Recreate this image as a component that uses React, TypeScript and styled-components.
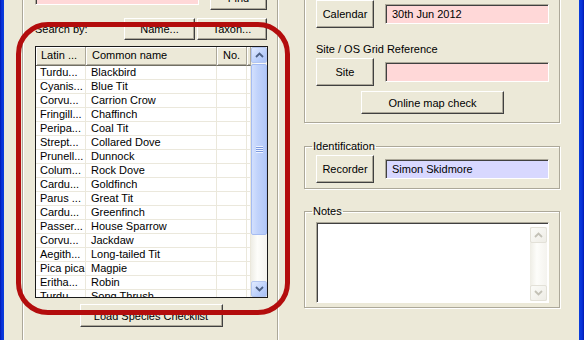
import React from "react";
import styled, { createGlobalStyle } from "styled-components";

const GlobalStyle = createGlobalStyle`
  html, body {
    margin: 0;
    padding: 0;
  }
  body {
    font-family: "Liberation Sans", Arial, sans-serif;
    font-size: 11px;
    color: #000;
    background: #ECE9D8;
  }
`;

const Frame = styled.div`
  position: relative;
  width: 584px;
  height: 340px;
  overflow: hidden;
  display: flex;
  background: #ECE9D8;
`;

const FrameEdge = styled.div<{ $w: number; $dir: string }>`
  width: ${(p) => p.$w}px;
  flex: none;
  background: linear-gradient(${(p) => p.$dir}, #0a3edb, #0831d9 60%, #0019b0);
`;

const Body = styled.div`
  flex: 1;
  display: flex;
  align-items: stretch;
  padding-left: 18px;
`;

const LeftPanel = styled.div`
  width: 256px;
  box-sizing: border-box;
  display: flex;
  flex-direction: column;
  padding: 0 10px 0 12px;
  border-left: 1px solid #aca899;
  border-right: 1px solid #aca899;
  box-shadow: inset 1px 0 #fff, 1px 0 #fff;
`;

const TopRow = styled.div`
  display: flex;
  align-items: flex-start;
  justify-content: space-between;
  height: 24px;
  margin-top: -14px;
`;

const SearchRow = styled.div`
  display: flex;
  align-items: center;
  height: 22px;
  margin-top: 8px;
  gap: 2px;
`;

const Label = styled.div`
  flex: 1;
  line-height: 14px;
  white-space: nowrap;
`;

const Button = styled.button<{ $w: number; $h: number }>`
  width: ${(p) => p.$w}px;
  height: ${(p) => p.$h}px;
  flex: none;
  box-sizing: border-box;
  padding: 0;
  font: inherit;
  color: #000;
  background: #ece9d8;
  border: 1px solid;
  border-color: #fff #404040 #404040 #fff;
  box-shadow: inset -1px -1px #aca899;
  white-space: nowrap;
`;

const Field = styled.div<{ $bg: string; $w: number; $h: number }>`
  width: ${(p) => p.$w}px;
  height: ${(p) => p.$h}px;
  flex: none;
  box-sizing: border-box;
  background: ${(p) => p.$bg};
  border: 1px solid;
  border-color: #aca899 #fff #fff #aca899;
  box-shadow: inset 1px 1px #404040;
  padding: 3px 0 0 6px;
  line-height: 13px;
  white-space: nowrap;
`;

const ListBox = styled.div`
  margin-top: 6px;
  width: 233px;
  height: 252px;
  box-sizing: border-box;
  border: 1px solid #1a1a1a;
  background: #fff;
  display: flex;
  overflow: hidden;
`;

const DataArea = styled.div`
  flex: 1;
  display: flex;
  flex-direction: column;
  overflow: hidden;
`;

const GridRow = styled.div`
  display: grid;
  grid-template-columns: 50px 131px 30px 1fr;
  flex: none;
`;

const HeadCell = styled.div<{ $pad: number }>`
  height: 19px;
  box-sizing: border-box;
  padding-left: ${(p) => p.$pad}px;
  line-height: 17px;
  background: #ece9d8;
  border-right: 1px solid #aca899;
  border-bottom: 1px solid #716f64;
  box-shadow: inset 1px 1px #fff, inset 0 -1px #aca899;
  white-space: nowrap;
  overflow: hidden;
`;

const Cell = styled.div<{ $pad: number }>`
  height: 14px;
  box-sizing: border-box;
  padding-left: ${(p) => p.$pad}px;
  line-height: 13px;
  border-right: 1px solid #ebe8dc;
  border-bottom: 1px solid #ebe8dc;
  white-space: nowrap;
  overflow: hidden;
`;

const ScrollBar = styled.div<{ $off?: boolean }>`
  width: ${(p) => (p.$off ? 17 : 16)}px;
  flex: none;
  display: flex;
  flex-direction: column;
  background: linear-gradient(to right, #eeede5, #fdfdfa 40%, #f4f3ee);
`;

const ScrollButton = styled.div<{ $off?: boolean }>`
  height: 16px;
  flex: none;
  box-sizing: border-box;
  display: flex;
  align-items: center;
  justify-content: center;
  border-radius: 2px;
  border: 1px solid ${(p) => (p.$off ? "#e3e1d8" : "#b4c6f0")};
  background: ${(p) =>
    p.$off
      ? "linear-gradient(135deg, #fbfbf8, #eeede6)"
      : "linear-gradient(135deg, #e2ebfe, #bcd0fb 60%, #a9c1f5)"};
`;

const Track = styled.div`
  flex: 1;
  display: flex;
  flex-direction: column;
`;

const Thumb = styled.div`
  height: 171px;
  margin-top: 1px;
  box-sizing: border-box;
  border: 1px solid #a5bcf2;
  border-radius: 2px;
  background: linear-gradient(to right, #d3e0fd, #c1d3fb 40%, #b2c8f8);
  display: flex;
  align-items: center;
  justify-content: center;
`;

const Grip = styled.div`
  width: 7px;
  height: 7px;
  background: repeating-linear-gradient(
    to bottom,
    #eef3fe 0,
    #eef3fe 1px,
    #7d9ae0 1px,
    #7d9ae0 2px
  );
`;

const LoadRow = styled.div`
  display: flex;
  justify-content: center;
  margin-top: 6px;
`;

const RightCol = styled.div`
  width: 256px;
  margin-left: 26px;
  display: flex;
  flex-direction: column;
`;

const Group = styled.fieldset<{ $pt: number; $pb: number }>`
  margin: 0;
  min-width: 0;
  padding: ${(p) => p.$pt}px 10px ${(p) => p.$pb}px 11px;
  border: 1px solid #aca899;
  box-shadow: 1px 1px #fff, inset 1px 1px #fff;
  display: flex;
  flex-direction: column;
`;

const Legend = styled.legend`
  padding: 0 1px;
  margin-left: -4px;
  line-height: 13px;
`;

const FieldRow = styled.div`
  display: flex;
  align-items: center;
  gap: 11px;
`;

const CenterRow = styled.div`
  display: flex;
  justify-content: center;
  margin-top: 5px;
`;

const SubLabel = styled.div`
  line-height: 14px;
  margin: 14px 0 2px;
`;

const NotesBox = styled.div`
  height: 81px;
  box-sizing: border-box;
  background: #fff;
  border: 1px solid;
  border-color: #aca899 #fff #fff #aca899;
  box-shadow: inset 1px 1px #404040;
  display: flex;
  justify-content: flex-end;
  padding: 4px 1px 1px 0;
`;

const Annotation = styled.div`
  position: absolute;
  left: 16px;
  top: 22px;
  width: 274px;
  height: 293px;
  box-sizing: border-box;
  border: 5px solid #b30d0d;
  border-radius: 32px;
  pointer-events: none;
`;

const Chevron = ({ up, color }: { up: boolean; color: string }) => (
  <svg width="9" height="6" viewBox="0 0 9 6">
    <path
      d={up ? "M1 5 L4.5 1.5 L8 5" : "M1 1 L4.5 4.5 L8 1"}
      fill="none"
      stroke={color}
      strokeWidth="1.8"
    />
  </svg>
);

const species: [string, string][] = [
  ["Turdu...", "Blackbird"],
  ["Cyanis...", "Blue Tit"],
  ["Corvu...", "Carrion Crow"],
  ["Fringill...", "Chaffinch"],
  ["Peripa...", "Coal Tit"],
  ["Strept...", "Collared Dove"],
  ["Prunell...", "Dunnock"],
  ["Colum...", "Rock Dove"],
  ["Cardu...", "Goldfinch"],
  ["Parus ...", "Great Tit"],
  ["Cardu...", "Greenfinch"],
  ["Passer...", "House Sparrow"],
  ["Corvu...", "Jackdaw"],
  ["Aegith...", "Long-tailed Tit"],
  ["Pica pica", "Magpie"],
  ["Eritha...", "Robin"],
  ["Turdu...", "Song Thrush"],
];

export default function App() {
  return (
    <>
      <GlobalStyle />
      <Frame>
        <FrameEdge $w={4} $dir="to left" />
        <Body>
          <LeftPanel>
            <TopRow>
              <Field $bg="#ffd8d8" $w={164} $h={19} />
              <Button $w={57} $h={24}>
                Find
              </Button>
            </TopRow>
            <SearchRow>
              <Label>Search by:</Label>
              <Button $w={71} $h={22}>
                Name...
              </Button>
              <Button $w={70} $h={22}>
                Taxon...
              </Button>
            </SearchRow>
            <ListBox>
              <DataArea>
                <GridRow>
                  <HeadCell $pad={5}>Latin ...</HeadCell>
                  <HeadCell $pad={6}>Common name</HeadCell>
                  <HeadCell $pad={6}>No.</HeadCell>
                  <HeadCell $pad={0} />
                </GridRow>
                {species.map(([latin, common], i) => (
                  <GridRow key={i}>
                    <Cell $pad={4}>{latin}</Cell>
                    <Cell $pad={5}>{common}</Cell>
                    <Cell $pad={5} />
                    <Cell $pad={0} />
                  </GridRow>
                ))}
              </DataArea>
              <ScrollBar>
                <ScrollButton>
                  <Chevron up color="#4d6185" />
                </ScrollButton>
                <Track>
                  <Thumb>
                    <Grip />
                  </Thumb>
                </Track>
                <ScrollButton>
                  <Chevron up={false} color="#4d6185" />
                </ScrollButton>
              </ScrollBar>
            </ListBox>
            <LoadRow>
              <Button $w={143} $h={23}>
                Load Species Checklist
              </Button>
            </LoadRow>
          </LeftPanel>

          <RightCol>
            <Group $pt={39} $pb={8} style={{ marginTop: -40 }}>
              <FieldRow>
                <Button $w={58} $h={28}>
                  Calendar
                </Button>
                <Field $bg="#ffd8d8" $w={164} $h={20}>
                  30th Jun 2012
                </Field>
              </FieldRow>
              <SubLabel>Site / OS Grid Reference</SubLabel>
              <FieldRow>
                <Button $w={58} $h={28}>
                  Site
                </Button>
                <Field $bg="#ffd8d8" $w={164} $h={20} />
              </FieldRow>
              <CenterRow>
                <Button $w={143} $h={23}>
                  Online map check
                </Button>
              </CenterRow>
            </Group>

            <Group $pt={2} $pb={5} style={{ marginTop: 17 }}>
              <Legend>Identification</Legend>
              <FieldRow>
                <Button $w={58} $h={28}>
                  Recorder
                </Button>
                <Field $bg="#d8d8ff" $w={164} $h={20}>
                  Simon Skidmore
                </Field>
              </FieldRow>
            </Group>

            <Group $pt={4} $pb={4} style={{ marginTop: 16 }}>
              <Legend>Notes</Legend>
              <NotesBox>
                <ScrollBar $off>
                  <ScrollButton $off>
                    <Chevron up color="#c3c1b6" />
                  </ScrollButton>
                  <Track />
                  <ScrollButton $off>
                    <Chevron up={false} color="#c3c1b6" />
                  </ScrollButton>
                </ScrollBar>
              </NotesBox>
            </Group>
          </RightCol>
        </Body>
        <FrameEdge $w={5} $dir="to right" />
        <Annotation />
      </Frame>
    </>
  );
}
